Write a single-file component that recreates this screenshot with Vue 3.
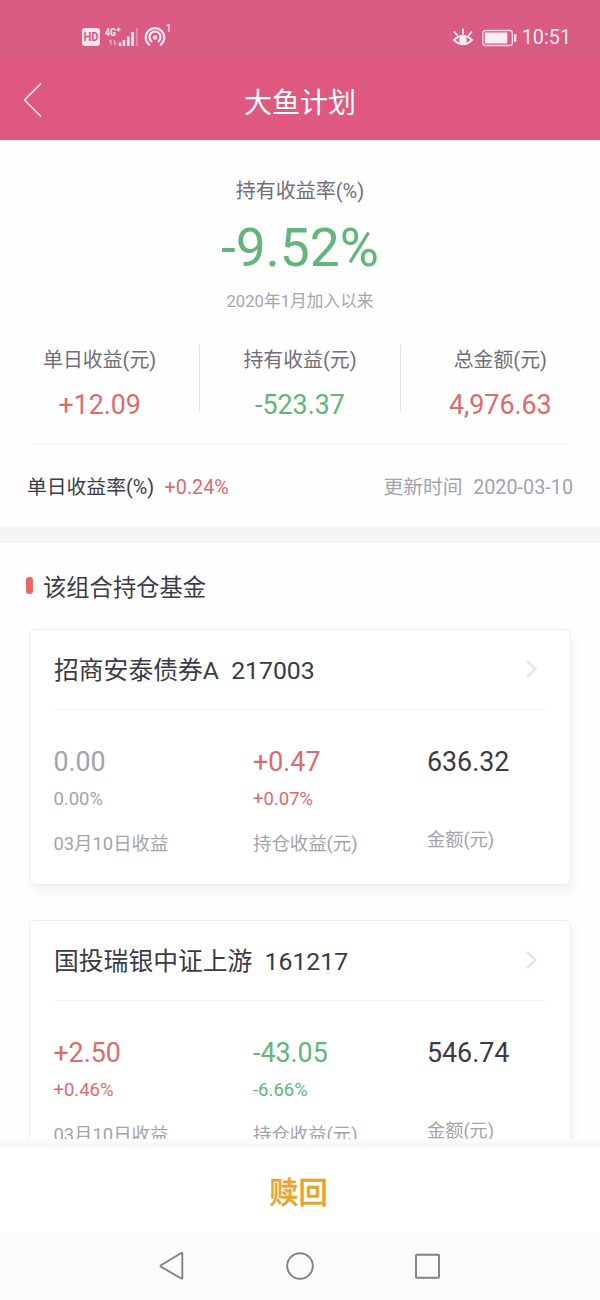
<template>
  <div class="page">
    <div class="status-bar">
      <div class="status-left">
        <svg class="icon-signal" width="100" height="30" viewBox="0 0 100 30">
          <rect x="2" y="8" width="18" height="18" rx="3" fill="#fbe6ee" />
          <text x="11" y="21.3" text-anchor="middle" font-size="12" font-weight="700" textLength="15" lengthAdjust="spacingAndGlyphs" fill="#da5b82">HD</text>
          <text x="25" y="16" font-size="11" font-weight="700" textLength="11" lengthAdjust="spacingAndGlyphs" fill="#fbe6ee">4G</text>
          <path d="M36.5 9.5h4M38.5 7.5v4" stroke="#fbe6ee" stroke-width="1.3" />
          <path d="M31 20v5M29.5 22l1.5-2M34.5 20v5M34.5 25l1.5-2" stroke="#eda5bd" stroke-width="1.3" fill="none" />
          <path d="M40 22.5v3.5M44 20v6M48.3 16.5v9.5M52.6 12v14" stroke="#fbe6ee" stroke-width="2.6" />
          <path d="M56.8 8v18" stroke="#e68aa8" stroke-width="2" />
          <g fill="none" stroke="#fbe6ee" stroke-width="2.2" stroke-linecap="round">
            <path d="M69.3 24.8a9.3 9.3 0 1 1 11.4 0" />
            <path d="M71.5 21.3a5.5 5.5 0 1 1 7 0" />
          </g>
          <circle cx="75" cy="17.5" r="2.3" fill="#fbe6ee" />
          <text x="85.5" y="12.3" font-size="11" fill="#fbe6ee">1</text>
        </svg>
      </div>
      <div class="status-right">
        <svg width="22" height="20" viewBox="0 0 22 20" fill="none" stroke="#fdecf2" stroke-width="1.9" stroke-linecap="round">
          <path d="M2 12Q11 3.5 20 12Q11 20.5 2 12Z" />
          <path d="M11 5.5V1.5M5 7L2.5 4M17 7l2.5-3" />
          <circle cx="11" cy="12" r="2.8" fill="#fdecf2" />
        </svg>
        <svg class="battery" width="35" height="18" viewBox="0 0 35 18">
          <rect x="0.8" y="1.5" width="29.5" height="15" rx="2.5" fill="none" stroke="#f9dbe5" stroke-width="1.3" />
          <rect x="2.8" y="3.5" width="22.5" height="11" fill="#fdecf2" />
          <rect x="32" y="5" width="2.3" height="8" rx="0.8" fill="#fdecf2" />
        </svg>
        <span class="time">10:51</span>
      </div>
    </div>

    <header class="header">
      <svg class="back" width="22" height="36" viewBox="0 0 22 36" fill="none" stroke="#fdeaf0" stroke-width="1.7" stroke-linecap="round" stroke-linejoin="round">
        <path d="M18.5 2L2.5 18l16 16" />
      </svg>
      <h1 class="title">大鱼计划</h1>
    </header>

    <main class="content">
      <section class="summary">
        <div class="rate-label">持有收益率(%)</div>
        <div class="rate-value green">-9.52%</div>
        <div class="rate-since">2020年1月加入以来</div>

        <div class="stats">
          <div v-for="item in stats" :key="item.label" class="stat">
            <div class="stat-label">{{ item.label }}</div>
            <div class="stat-value" :class="item.color">{{ item.value }}</div>
          </div>
        </div>

        <div class="daily">
          <div>
            <span>单日收益率(%)</span>
            <span class="daily-value red">+0.24%</span>
          </div>
          <div class="update">
            <span>更新时间</span>
            <span class="update-date">2020-03-10</span>
          </div>
        </div>
      </section>

      <section class="funds">
        <h2 class="section-title">该组合持仓基金</h2>

        <div v-for="fund in funds" :key="fund.code" class="card">
          <div class="card-head">
            <div>
              <span>{{ fund.name }}</span>
              <span class="code">{{ fund.code }}</span>
            </div>
            <svg class="arrow" width="14" height="20" viewBox="0 0 14 20" fill="none" stroke="#e6e6e8" stroke-width="2.8">
              <path d="M2 2l8.5 8L2 18" />
            </svg>
          </div>
          <div class="card-body">
            <div class="col col-day">
              <div class="amount" :class="fund.dayColor">{{ fund.day }}</div>
              <div class="percent" :class="fund.dayColor">{{ fund.dayRate }}</div>
              <div class="label">03月10日收益</div>
            </div>
            <div class="col col-hold">
              <div class="amount" :class="fund.holdColor">{{ fund.hold }}</div>
              <div class="percent" :class="fund.holdColor">{{ fund.holdRate }}</div>
              <div class="label">持仓收益(元)</div>
            </div>
            <div class="col col-total">
              <div class="amount">{{ fund.total }}</div>
              <div class="label">金额(元)</div>
            </div>
          </div>
        </div>
      </section>
    </main>

    <footer class="footer">
      <button type="button" class="redeem-btn">赎回</button>
    </footer>

    <nav class="nav-bar">
      <svg width="28" height="30" viewBox="0 0 28 30">
        <path d="M24.3 2.5v24.5q0 1-1 .5L3 15.7q-1-.7 0-1.4L23.3 2q1-.5 1 .5z" />
      </svg>
      <svg width="30" height="30" viewBox="0 0 30 30">
        <circle cx="15" cy="15" r="12.8" />
      </svg>
      <svg width="28" height="30" viewBox="0 0 28 30">
        <rect x="2" y="3.7" width="23" height="23" rx="0.8" />
      </svg>
    </nav>
  </div>
</template>

<script setup>
import { ref } from 'vue'

const stats = ref([
  { label: '单日收益(元)', value: '+12.09', color: 'red' },
  { label: '持有收益(元)', value: '-523.37', color: 'green' },
  { label: '总金额(元)', value: '4,976.63', color: 'red' }
])

const funds = ref([
  {
    name: '招商安泰债券A',
    code: '217003',
    day: '0.00',
    dayRate: '0.00%',
    dayColor: 'gray',
    hold: '+0.47',
    holdRate: '+0.07%',
    holdColor: 'red',
    total: '636.32'
  },
  {
    name: '国投瑞银中证上游',
    code: '161217',
    day: '+2.50',
    dayRate: '+0.46%',
    dayColor: 'red',
    hold: '-43.05',
    holdRate: '-6.66%',
    holdColor: 'green',
    total: '546.74'
  }
])
</script>

<style>
body {
  margin: 0;
  background: #fff;
}
</style>

<style scoped>
.page {
  width: 600px;
  height: 1300px;
  display: flex;
  flex-direction: column;
  overflow: hidden;
  background: #fefefe;
  color: #3b3b45;
  font-family: Roboto, 'Noto Sans CJK SC', sans-serif;
}

.page * {
  box-sizing: border-box;
}

svg {
  display: block;
}

.red {
  color: #dd6a6c;
}

.green {
  color: #62b67a;
}

.gray {
  color: #a3a3ad;
}

/* Status bar */
.status-bar {
  flex: none;
  height: 60px;
  padding: 0 29px 0 80px;
  display: flex;
  justify-content: space-between;
  background: #da5b82;
}

.status-left {
  padding-top: 20px;
}

.status-right {
  height: 75px;
  display: flex;
  align-items: center;
}

.status-right svg {
  position: relative;
  left: 1px;
}

.battery {
  margin-left: 8px;
}

.time {
  margin-left: 6px;
  font-size: 19.8px;
  line-height: 24px;
  color: #fdeaf0;
}

/* Header */
.header {
  flex: none;
  height: 80px;
  padding: 0 22px;
  display: flex;
  align-items: center;
  background: #df587f;
}

.title {
  flex: 1;
  margin: 7px 22px 0 0;
  text-align: center;
  font-size: 28px;
  line-height: 40px;
  font-weight: 400;
  color: #fff;
}

/* Summary */
.content {
  flex: 1;
  min-height: 0;
  overflow: hidden;
}

.summary {
  height: 403px;
  padding: 36px 27px 0;
  border-bottom: 16px solid #f5f5f5;
}

.rate-label {
  text-align: center;
  font-size: 20px;
  line-height: 30px;
  color: #6f6f79;
}

.rate-value {
  margin-top: 12px;
  text-align: center;
  font-size: 53.4px;
  line-height: 60px;
}

.rate-since {
  margin-top: 12px;
  text-align: center;
  font-size: 16.7px;
  line-height: 24px;
  color: #a5a5af;
}

.stats {
  display: flex;
  margin: 31px -27px 0;
  height: 66px;
}

.stat {
  flex: 1;
  text-align: center;
}

.stat + .stat {
  border-left: 1px solid #e0e0e2;
}

.stat-label {
  padding-top: 1px;
  font-size: 19.9px;
  line-height: 30px;
  color: #6f6f79;
}

.stat-value {
  margin-top: 12px;
  font-size: 26.8px;
  line-height: 34px;
}

.daily {
  display: flex;
  justify-content: space-between;
  align-items: center;
  margin-top: 33px;
  height: 84px;
  padding-top: 3px;
  border-top: 1px solid #f5f5f6;
  font-size: 19.8px;
  line-height: 30px;
}

.daily-value {
  margin-left: 6px;
}

.daily > div {
  display: flex;
  gap: 4.5px;
}

.update {
  color: #a3a3ad;
}

.update-date {
  margin-left: 6px;
}

/* Fund list */
.funds {
  padding: 23px 29px 0;
}

.section-title {
  display: flex;
  align-items: center;
  margin: 0 0 23px -3px;
  height: 40px;
  font-size: 23.3px;
  font-weight: 400;
}

.section-title::before {
  content: '';
  width: 7px;
  height: 17px;
  margin: -2px 10px 0 0;
  border-radius: 3px;
  background: #ee6467;
}

.card {
  height: 256px;
  margin-bottom: 35px;
  padding: 0 24px;
  border: 1px solid #ededee;
  border-radius: 6px;
  background: #fff;
  box-shadow: 3px 6px 10px rgba(0, 0, 0, 0.05);
}

.card-head {
  display: flex;
  justify-content: space-between;
  align-items: center;
  height: 80px;
  padding: 3px 7px 0 0;
  border-bottom: 1px solid #f2f2f3;
  font-size: 24.8px;
  line-height: 36px;
}

.code {
  margin-left: 6px;
}

.code::before {
  content: '\00a0';
}

.arrow {
  margin-top: -4px;
}

.card-body {
  display: flex;
  padding-top: 35px;
}

.col-day {
  width: 199px;
}

.col-hold {
  width: 174px;
}

.amount {
  font-size: 26.8px;
  line-height: 34px;
}

.col-day .amount,
.col-day .percent,
.col-day .label {
  margin-left: -0.6px;
}

.percent {
  margin-top: 8px;
  font-size: 18.5px;
  line-height: 24px;
}

.label {
  margin-top: 19px;
  font-size: 18.4px;
  line-height: 28px;
  color: #a3a3ad;
}

.col-total .label {
  margin-top: 47px;
  font-size: 18.2px;
}

/* Footer */
.footer {
  flex: none;
  height: 93px;
  display: flex;
  flex-direction: column;
  background: #fff;
}

.footer::before {
  content: '';
  height: 8px;
  background: linear-gradient(#fcfcfc, #f5f5f5);
}

.redeem-btn {
  flex: 1;
  padding: 6px 3px 0 0;
  border: none;
  background: none;
  font-family: inherit;
  font-size: 29.3px;
  font-weight: 500;
  line-height: 40px;
  color: #e9a32b;
  -webkit-text-stroke: 0.4px #e9a32b;
}

.nav-bar {
  flex: none;
  height: 68px;
  padding: 0 158px;
  display: flex;
  justify-content: space-between;
  align-items: center;
  background: #fbfbfb;
}

.nav-bar svg {
  fill: none;
  stroke: #828282;
  stroke-width: 1.9;
}
</style>
